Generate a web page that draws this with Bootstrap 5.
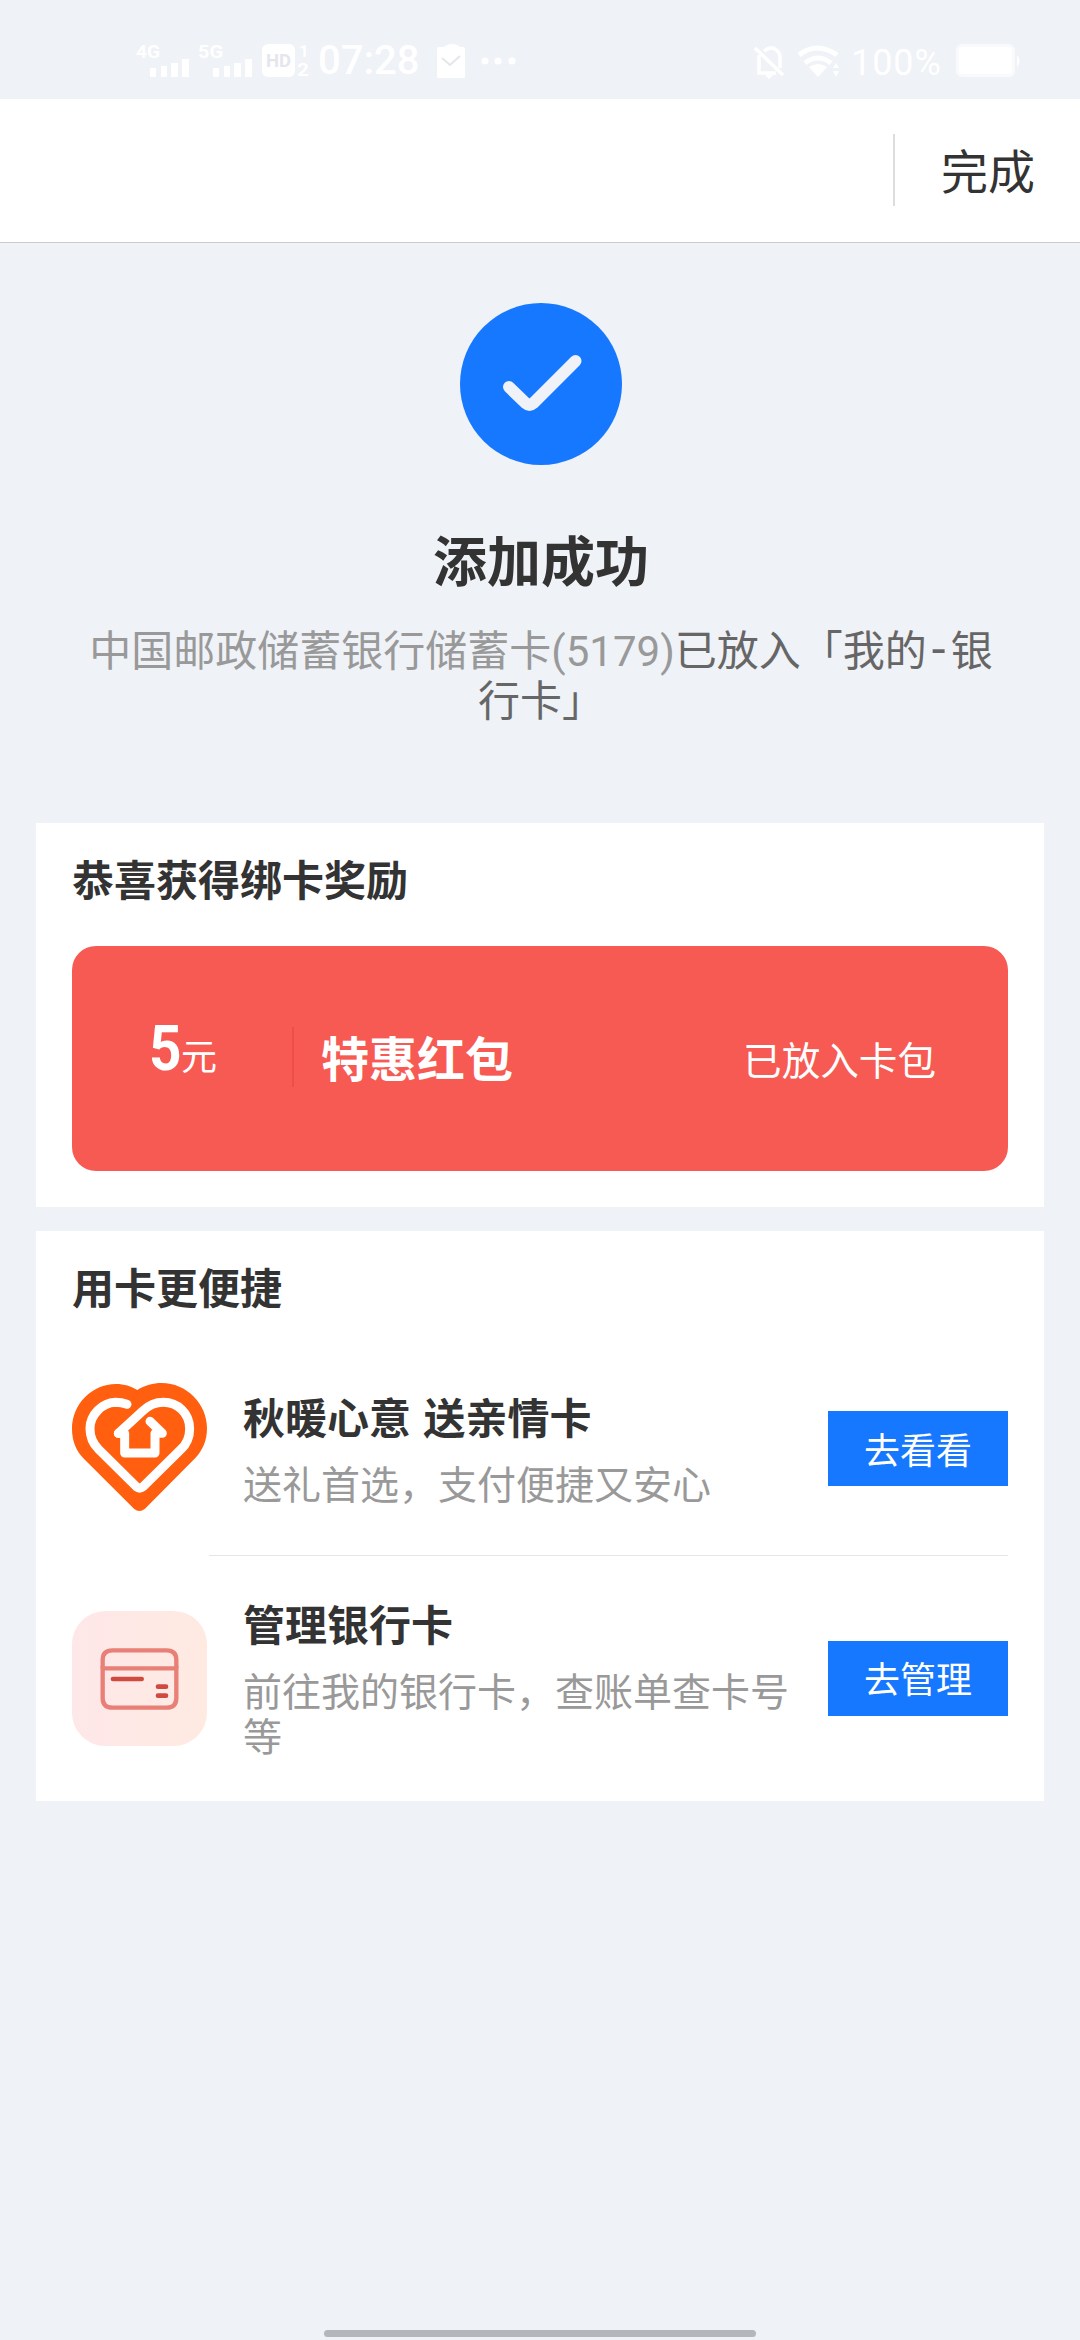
<!DOCTYPE html>
<html lang="zh-CN">
<head>
<meta charset="utf-8">
<meta name="viewport" content="width=device-width, initial-scale=1">
<title>添加成功</title>
<link href="https://cdn.jsdelivr.net/npm/bootstrap@5.3.0/dist/css/bootstrap.min.css" rel="stylesheet">
<style>
  body { background: #eff2f7; color: #333; font-family: "Noto Sans CJK SC", sans-serif; width: 1080px; height: 2340px; overflow: hidden; }
  svg { display: block; flex: none; }
  .latin { font-family: Roboto, sans-serif; }
  .status-bar { height: 99px; padding: 0 60px 0 130px; }
  .clock { font-size: 40px; line-height: 40px; font-weight: 500; margin: 0 0 1px 8px; width: 119px; }
  .battery-pct { font-size: 36px; line-height: 36px; letter-spacing: .9px; margin: 2px 0 0 11px; width: 104px; }
  .top-nav { height: 144px; border-bottom: 1px solid #c9cbcf; padding-right: 45px; }
  .nav-rule { width: 2px; height: 72px; background: #ddd; margin: 0 46px 2px 0; }
  .done { font-size: 47px; line-height: 60px; margin-bottom: 3px; }
  .hero { height: 580px; padding: 60px 71px 0 73px; }
  .hero h1 { font-size: 54px; line-height: 60px; margin: 64px 0 35px; }
  .hero p { font-size: 42px; line-height: 48px; color: #666; }
  .hero p .latin { line-height: 1; }
  .muted { color: #999; }
  .dash { font-size: 50px; padding: 0 5px; }
  .panel { margin: 0 36px 24px; padding: 30px 36px 0; }
  .panel h2, .entry h3 { font-size: 42px; line-height: 50px; margin: 0; }
  .coupon { height: 225px; margin: 43px 0 36px; border-radius: 24px; background: #f75a53; padding: 0 72px 0 77px; }
  .amount { width: 145px; height: 60px; border-right: 2px solid #ee4d4c; margin: 0 27px 3px 0; }
  .amount .latin { font-size: 63px; line-height: 44px; font-weight: 700; display: inline-block; width: 32px; transform: scaleX(.9); transform-origin: left; }
  .amount .unit { font-size: 36px; line-height: 44px; }
  .coupon-name { font-size: 48px; line-height: 60px; font-weight: 700; padding-bottom: 6px; }
  .coupon-state { font-size: 38.6px; line-height: 60px; padding-bottom: 2px; }
  .entry-first { height: 213px; margin-top: 31px; }
  .entry-second { height: 246px; }
  .entry-line { width: 799px; height: 1px; background: #e5e5e5; margin-bottom: -1px; }
  .entry-text { width: 555px; margin-left: 36px; padding-bottom: 2px; }
  .entry h3 { word-spacing: 3px; }
  .entry p { font-size: 39px; line-height: 45px; color: #999; margin: 19px 0 0; }
  .go { width: 180px; height: 75px; border-radius: 0; border: 0; padding: 0 0 2px; background: #1677ff; font-size: 36px; line-height: 72px; }
  .home-bar { width: 432px; height: 7px; border-radius: 4px; background: #b3b6bb; margin-bottom: 3px; }
</style>
<script src="https://cdn.jsdelivr.net/npm/bootstrap@5.3.0/dist/js/bootstrap.bundle.min.js"></script>
</head>
<body class="d-flex flex-column">
  <header>
    <div class="status-bar d-flex justify-content-between align-items-center text-white">
      <div class="d-flex align-items-center pt-4">
        <svg width="180" height="56" viewBox="130 33 180 56" fill="#fff" font-family="Roboto, sans-serif" font-weight="700">
          <text x="136" y="57" font-size="19" textLength="24" lengthAdjust="spacingAndGlyphs">4G</text>
          <path d="M150 67h6v9h-6zM161 65h6v11h-6zM171 62h7v14h-7zM182 58h7v18h-7z"/>
          <text x="198" y="57" font-size="19" textLength="25" lengthAdjust="spacingAndGlyphs">5G</text>
          <path d="M213 67h6v9h-6zM224 65h6v11h-6zM234 62h7v14h-7zM245 58h7v18h-7z"/>
          <rect x="262" y="43" width="33" height="33" rx="6"/>
          <text x="266" y="66" font-size="19" fill="#e3e7ed" textLength="25" lengthAdjust="spacingAndGlyphs">HD</text>
          <text x="299" y="56" font-size="17">1</text>
          <text x="297" y="75" font-size="18" textLength="12" lengthAdjust="spacingAndGlyphs">2</text>
        </svg>
        <span class="clock latin">07:28</span>
        <svg width="80" height="36" viewBox="437 43 80 36">
          <path fill="#fff" d="M440 46h4q3-3 8-3t8 3h3a2 2 0 0 1 2 2v28a1 1 0 0 1-1 1h-26a1 1 0 0 1-1-1V48a2 2 0 0 1 2-2z"/>
          <path d="M442 57l8 7 10-9" fill="none" stroke="#e3e6ea" stroke-width="2"/>
          <g fill="#fff"><circle cx="485" cy="60" r="3.5"/><circle cx="498" cy="60" r="3.5"/><circle cx="512" cy="60" r="3.5"/></g>
        </svg>
      </div>
      <div class="d-flex align-items-center pt-4">
        <svg width="86" height="36" viewBox="753 43 86 36" fill="none" stroke="#fff" stroke-width="3.500">
          <path d="M754 47l28 27M758 54v18h17M763 50q6-5 11-2 5 3 5 9v10"/>
          <path d="M764 74h8l-4 4zM765 48q3-5 6 0z" fill="#fff" stroke="none"/>
          <path d="M798 54q18-14 38 0M804 62q13-10 26 0" stroke-width="5"/>
          <path d="M808 66q9-6 18 0l-9 10zM832 67l3-5 3 5zM832 70h6l-3 6z" fill="#fff" stroke="none"/>
        </svg>
        <span class="battery-pct latin">100%</span>
        <svg width="65" height="36" viewBox="955 43 65 36">
          <rect x="956" y="43" width="59" height="33" rx="6" fill="#f8fafc"/>
          <path d="M1017 54q5 6 0 12z" fill="#fff"/>
          <rect x="959" y="46" width="53" height="27" rx="3" fill="#fff"/>
        </svg>
      </div>
    </div>
    <nav class="top-nav bg-white d-flex justify-content-end align-items-center">
      <div class="nav-rule"></div>
      <div class="done">完成</div>
    </nav>
  </header>

  <main>
    <section class="hero text-center">
      <svg class="mx-auto" width="162" height="162" viewBox="0 0 162 162">
        <circle cx="81" cy="81" r="81" fill="#1677ff"/>
        <path d="M49 84l16.500 16q4 3.500 8 0L115.500 58" fill="none" stroke="#eff2f7" stroke-width="12" stroke-linecap="round" stroke-linejoin="round"/>
      </svg>
      <h1 class="fw-bold">添加成功</h1>
      <p class="mb-0"><span class="muted">中国邮政储蓄银行储蓄卡<span class="latin">(5179)</span></span>已放入「我的<span class="dash latin">-</span>银<br>行卡」</p>
    </section>

    <section class="panel bg-white overflow-hidden">
      <h2 class="fw-bold">恭喜获得绑卡奖励</h2>
      <div class="coupon d-flex align-items-center text-white">
        <div class="amount"><span class="latin">5</span><span class="unit">元</span></div>
        <div class="coupon-name">特惠红包</div>
        <div class="coupon-state ms-auto">已放入卡包</div>
      </div>
    </section>

    <section class="panel bg-white">
      <h2 class="fw-bold">用卡更便捷</h2>
      <div class="entry entry-first d-flex align-items-center">
        <svg width="135" height="135" viewBox="18 21 405 405">
          <path fill="#ff5f0f" d="M204 404L55 256C30 231 18 200 18 165C18 90 78 30 150 30C175 30 195 37 214 48C236 34 262 27 287 27C362 27 423 90 423 162C423 200 410 228 388 252L237 404Q220 418 204 404Z"/>
          <path fill="none" stroke="#fff" stroke-width="27" stroke-linecap="round" stroke-linejoin="round" d="M183 91C172 87 160 85 148 85C108 87 72 122 72 164C72 190 82 210 98 226L211 338Q221 346 231 338L345 226C362 210 371 190 371 164C371 118 335 85 292 85C268 85 247 95 230 111L157 178"/>
          <path fill="none" stroke="#fff" stroke-width="27" stroke-linecap="round" stroke-linejoin="round" d="M157 178H176V237H267V178H289L252 142"/>
        </svg>
        <div class="entry-text">
          <h3 class="fw-bold">秋暖心意 送亲情卡</h3>
          <p>送礼首选，支付便捷又安心</p>
        </div>
        <button class="btn btn-primary go ms-auto">去看看</button>
      </div>
      <div class="entry-line ms-auto"></div>
      <div class="entry entry-second d-flex align-items-center">
        <svg width="135" height="135" viewBox="18 711 405 405" fill="none">
          <defs><linearGradient id="blush"><stop offset="0" stop-color="#fee7e8"/><stop offset="1" stop-color="#ffeae2"/></linearGradient></defs>
          <rect x="18" y="711" width="405" height="405" rx="100" fill="url(#blush)"/>
          <path d="M110 883V858Q110 829 139 829H302Q331 829 331 858V883" stroke="#e88078" stroke-width="13"/>
          <path d="M110 883V972Q110 1001 139 1001H302Q331 1001 331 972V883Z" stroke="#e88078" stroke-width="13"/>
          <path d="M141 915H227M276 938H300M276 965H300" stroke="#cf4a3f" stroke-width="14" stroke-linecap="round"/>
        </svg>
        <div class="entry-text">
          <h3 class="fw-bold">管理银行卡</h3>
          <p>前往我的银行卡，查账单查卡号等</p>
        </div>
        <button class="btn btn-primary go ms-auto">去管理</button>
      </div>
    </section>
  </main>

  <footer class="mt-auto d-flex justify-content-center">
    <div class="home-bar"></div>
  </footer>
</body>
</html>
